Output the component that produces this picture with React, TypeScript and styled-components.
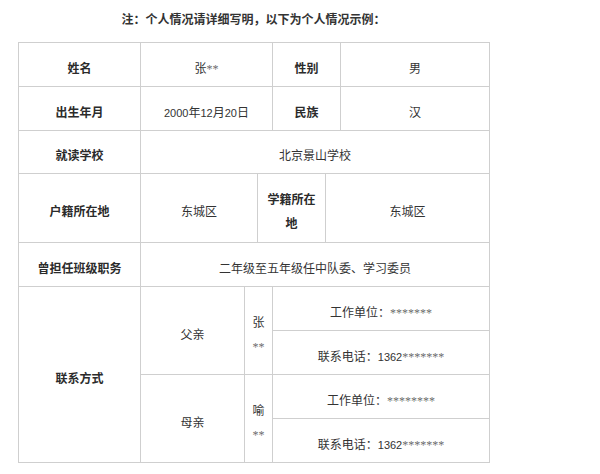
import React from "react";
import styled, { createGlobalStyle } from "styled-components";

const GlobalStyle = createGlobalStyle`
  html, body {
    margin: 0;
    padding: 0;
    background: #fff;
  }
  body {
    font-family: "Liberation Sans", "Noto Sans CJK SC", sans-serif;
    color: #333;
  }
`;

const Wrapper = styled.div`
  width: 471px;
  padding: 8px 0 0 18px;
`;

const Title = styled.p`
  margin: 0 0 10px;
  font-size: 12px;
  font-weight: 700;
  line-height: 24px;
  text-align: center;
  color: #333;
`;

const Table = styled.table`
  width: 471px;
  border-collapse: collapse;
  table-layout: fixed;
  font-size: 12px;
  line-height: 24px;
`;

const Cell = styled.td<{ $bold?: boolean; $h?: number }>`
  border: 1px solid #cfcfcf;
  padding: 8px 5px 0;
  height: ${(p) => p.$h ?? 43}px;
  box-sizing: border-box;
  text-align: center;
  vertical-align: middle;
  font-weight: ${(p) => (p.$bold ? 700 : 400)};
  color: ${(p) => (p.$bold ? "#2b2b2b" : "#333")};
`;

const Star = styled.span`
  font-family: "Liberation Serif", serif;
  font-size: 12px;
  color: #6b6b6b;
`;

const Num = styled.span`
  font-family: "Liberation Sans", sans-serif;
  font-size: 11px;
`;

const cols = [122, 104, 13, 15, 53, 15, 149];

const parents = [
  { who: "父亲", name: "张", work: "*******", phone: "1362", mask: "*******" },
  { who: "母亲", name: "喻", work: "********", phone: "1362", mask: "*******" },
];

export default function App() {
  return (
    <>
      <GlobalStyle />
      <Wrapper>
        <Title>注：个人情况请详细写明，以下为个人情况示例：</Title>
        <Table>
          <colgroup>
            {cols.map((w, i) => (
              <col key={i} style={{ width: w }} />
            ))}
          </colgroup>
          <tbody>
            <tr>
              <Cell $bold $h={44}>
                姓名
              </Cell>
              <Cell colSpan={3}>
                张<Star>**</Star>
              </Cell>
              <Cell $bold colSpan={2}>
                性别
              </Cell>
              <Cell>男</Cell>
            </tr>
            <tr>
              <Cell $bold $h={44}>
                出生年月
              </Cell>
              <Cell colSpan={3}>
                <Num>2000</Num>年<Num>12</Num>月<Num>20</Num>日
              </Cell>
              <Cell $bold colSpan={2}>
                民族
              </Cell>
              <Cell>汉</Cell>
            </tr>
            <tr>
              <Cell $bold $h={43}>
                就读学校
              </Cell>
              <Cell colSpan={6}>北京景山学校</Cell>
            </tr>
            <tr>
              <Cell $bold $h={69}>
                户籍所在地
              </Cell>
              <Cell colSpan={2}>东城区</Cell>
              <Cell $bold colSpan={2}>
                学籍所在地
              </Cell>
              <Cell colSpan={2}>东城区</Cell>
            </tr>
            <tr>
              <Cell $bold $h={44}>
                曾担任班级职务
              </Cell>
              <Cell colSpan={6}>二年级至五年级任中队委、学习委员</Cell>
            </tr>
            {parents.map((p, i) => (
              <React.Fragment key={p.who}>
                <tr>
                  {i === 0 && (
                    <Cell $bold rowSpan={4}>
                      联系方式
                    </Cell>
                  )}
                  <Cell rowSpan={2}>{p.who}</Cell>
                  <Cell colSpan={2} rowSpan={2}>
                    {p.name}
                    <Star>**</Star>
                  </Cell>
                  <Cell colSpan={3} $h={44}>
                    工作单位：<Star>{p.work}</Star>
                  </Cell>
                </tr>
                <tr>
                  <Cell colSpan={3} $h={44}>
                    联系电话：<Num>{p.phone}</Num>
                    <Star>{p.mask}</Star>
                  </Cell>
                </tr>
              </React.Fragment>
            ))}
          </tbody>
        </Table>
      </Wrapper>
    </>
  );
}
